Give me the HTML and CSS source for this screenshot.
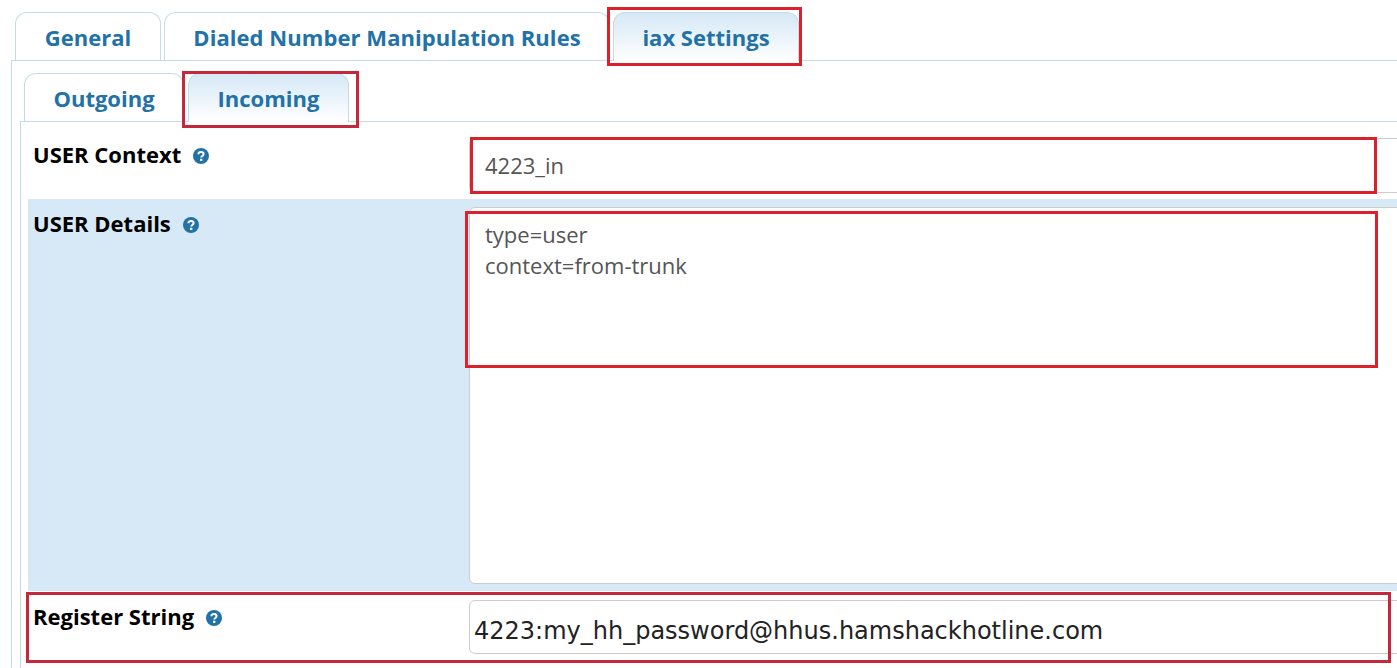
FILE: index.html
```html
<!DOCTYPE html>
<html>
<head>
	<meta charset="UTF-8">
	<title>iax Settings</title>
	<link rel="stylesheet" href="styles.css">
</head>
<body>
	<div class="page">
		<ul class="tabs main-tabs">
			<li class="tab tab-general">General</li>
			<li class="tab tab-dialed">Dialed Number Manipulation Rules</li>
			<li class="tab tab-iax active">iax Settings</li>
		</ul>
		<div class="panel outer">
			<ul class="tabs sub-tabs">
				<li class="tab tab-outgoing">Outgoing</li>
				<li class="tab tab-incoming active">Incoming</li>
			</ul>
			<div class="panel inner">
				<div class="row row-context">
					<div class="label">USER Context <svg class="help" viewBox="0 0 16 16"><circle cx="8" cy="8" r="8"/><path d="M5.400 6.200C5.500 4.700 6.600 4 8 4c1.500 0 2.600.8 2.600 2.100 0 1.900-2.400 1.800-2.400 3.400"/><rect x="7" y="10.700" width="2.400" height="2.300" rx=".4"/></svg></div>
					<div class="field input">4223_in</div>
				</div>
				<div class="row row-details">
					<div class="label">USER Details <svg class="help" viewBox="0 0 16 16"><circle cx="8" cy="8" r="8"/><path d="M5.400 6.200C5.500 4.700 6.600 4 8 4c1.500 0 2.600.8 2.600 2.100 0 1.900-2.400 1.800-2.400 3.400"/><rect x="7" y="10.700" width="2.400" height="2.300" rx=".4"/></svg></div>
					<div class="field textarea">type=user<br>context=from-trunk</div>
				</div>
				<div class="row row-register">
					<div class="label">Register String <svg class="help" viewBox="0 0 16 16"><circle cx="8" cy="8" r="8"/><path d="M5.400 6.200C5.500 4.700 6.600 4 8 4c1.500 0 2.600.8 2.600 2.100 0 1.900-2.400 1.800-2.400 3.400"/><rect x="7" y="10.700" width="2.400" height="2.300" rx=".4"/></svg></div>
					<div class="field input register">4223:my_hh_password@hhus.hamshackhotline.com</div>
				</div>
			</div>
		</div>
		<!-- red marks drawn over the screenshot -->
		<div class="mark mark-iax"></div>
		<div class="mark mark-incoming"></div>
		<div class="mark mark-context"></div>
		<div class="mark mark-details"></div>
		<div class="mark mark-register"></div>
	</div>
</body>
</html>
```

FILE: styles.css
```css
*{ margin: 0; padding: 0; box-sizing: border-box; }
html,body{ height: 100%; overflow: hidden; background: #fff; }
body{ font-family: "Open Sans", "Liberation Sans", sans-serif; font-size: 22px; }
.page{ position: relative; width: 1397px; height: 668px; overflow: hidden; padding: 12px 0 0 11px; }

.tabs{ display: flex; list-style: none; height: 48px; position: relative; z-index: 1; }
.tab{ height: 48px; border: 1px solid #c5dbe5; border-bottom: 0; border-radius: 12px 12px 0 0; background: #fff; color: #2272a8; font-weight: 700; line-height: 48px; text-align: center; }
.tab.active{ height: 49px; background: linear-gradient(#d6e8f6, #fff); }

.main-tabs{ padding-left: 4px; }
.tab-general{ width: 146px; margin-right: 3px; }
.tab-dialed{ width: 446px; margin-right: 3px; letter-spacing: .06px; }
.tab-iax{ width: 186px; }

.panel{ border: 1px solid #c5dbe5; border-right: 0; background: #fff; }
.outer{ width: 1500px; height: 640px; padding: 12px 0 0 8px; }
.sub-tabs{ padding-left: 4px; }
.tab-outgoing{ width: 160px; margin-right: 4px; }
.tab-incoming{ width: 161px; }
.inner{ width: 1480px; height: 560px; padding: 0 0 0 7px; border-radius: 0 0 0 12px; }

.row{ display: flex; padding-left: 5px; }
.row-context{ height: 77px; padding-top: 16px; }
.row-details{ height: 392px; padding-top: 8px; background: #d7e9f7; }
.row-register{ height: 78px; padding-top: 9px; }

.label{ width: 436px; flex: none; margin-top: -1px; color: #000; font-weight: 700; line-height: 34px; white-space: nowrap; }
.help{ width: 16px; height: 16px; margin-left: 6px; vertical-align: -1px; }
.help circle{ fill: #2272a8; }
.help path{ fill: none; stroke: #fff; stroke-width: 2; }
.help rect{ fill: #fff; }

.field{ width: 980px; border: 1px solid #ccc; border-radius: 6px; background: #fff; color: #555; line-height: 31px; }
.input{ height: 55px; padding: 11px 15px; }
.textarea{ height: 377px; padding: 11px 15px; }
.input.register{ height: 54px; padding: 15px 4px; color: #222; font-family: "DejaVu Sans", sans-serif; font-size: 24px; line-height: 30px; white-space: nowrap; }

.mark{ position: absolute; z-index: 2; border: 3px solid #d9222c; }
.mark-iax{ left: 607px; top: 7px; width: 195px; height: 59px; }
.mark-incoming{ left: 182px; top: 71px; width: 177px; height: 57px; border-color: #c4283a; }
.mark-context{ left: 470px; top: 137px; width: 907px; height: 57px; }
.mark-details{ left: 465px; top: 211px; width: 913px; height: 157px; }
.mark-register{ left: 26px; top: 592px; width: 1365px; height: 71px; border-color: #c4283a; }
```
